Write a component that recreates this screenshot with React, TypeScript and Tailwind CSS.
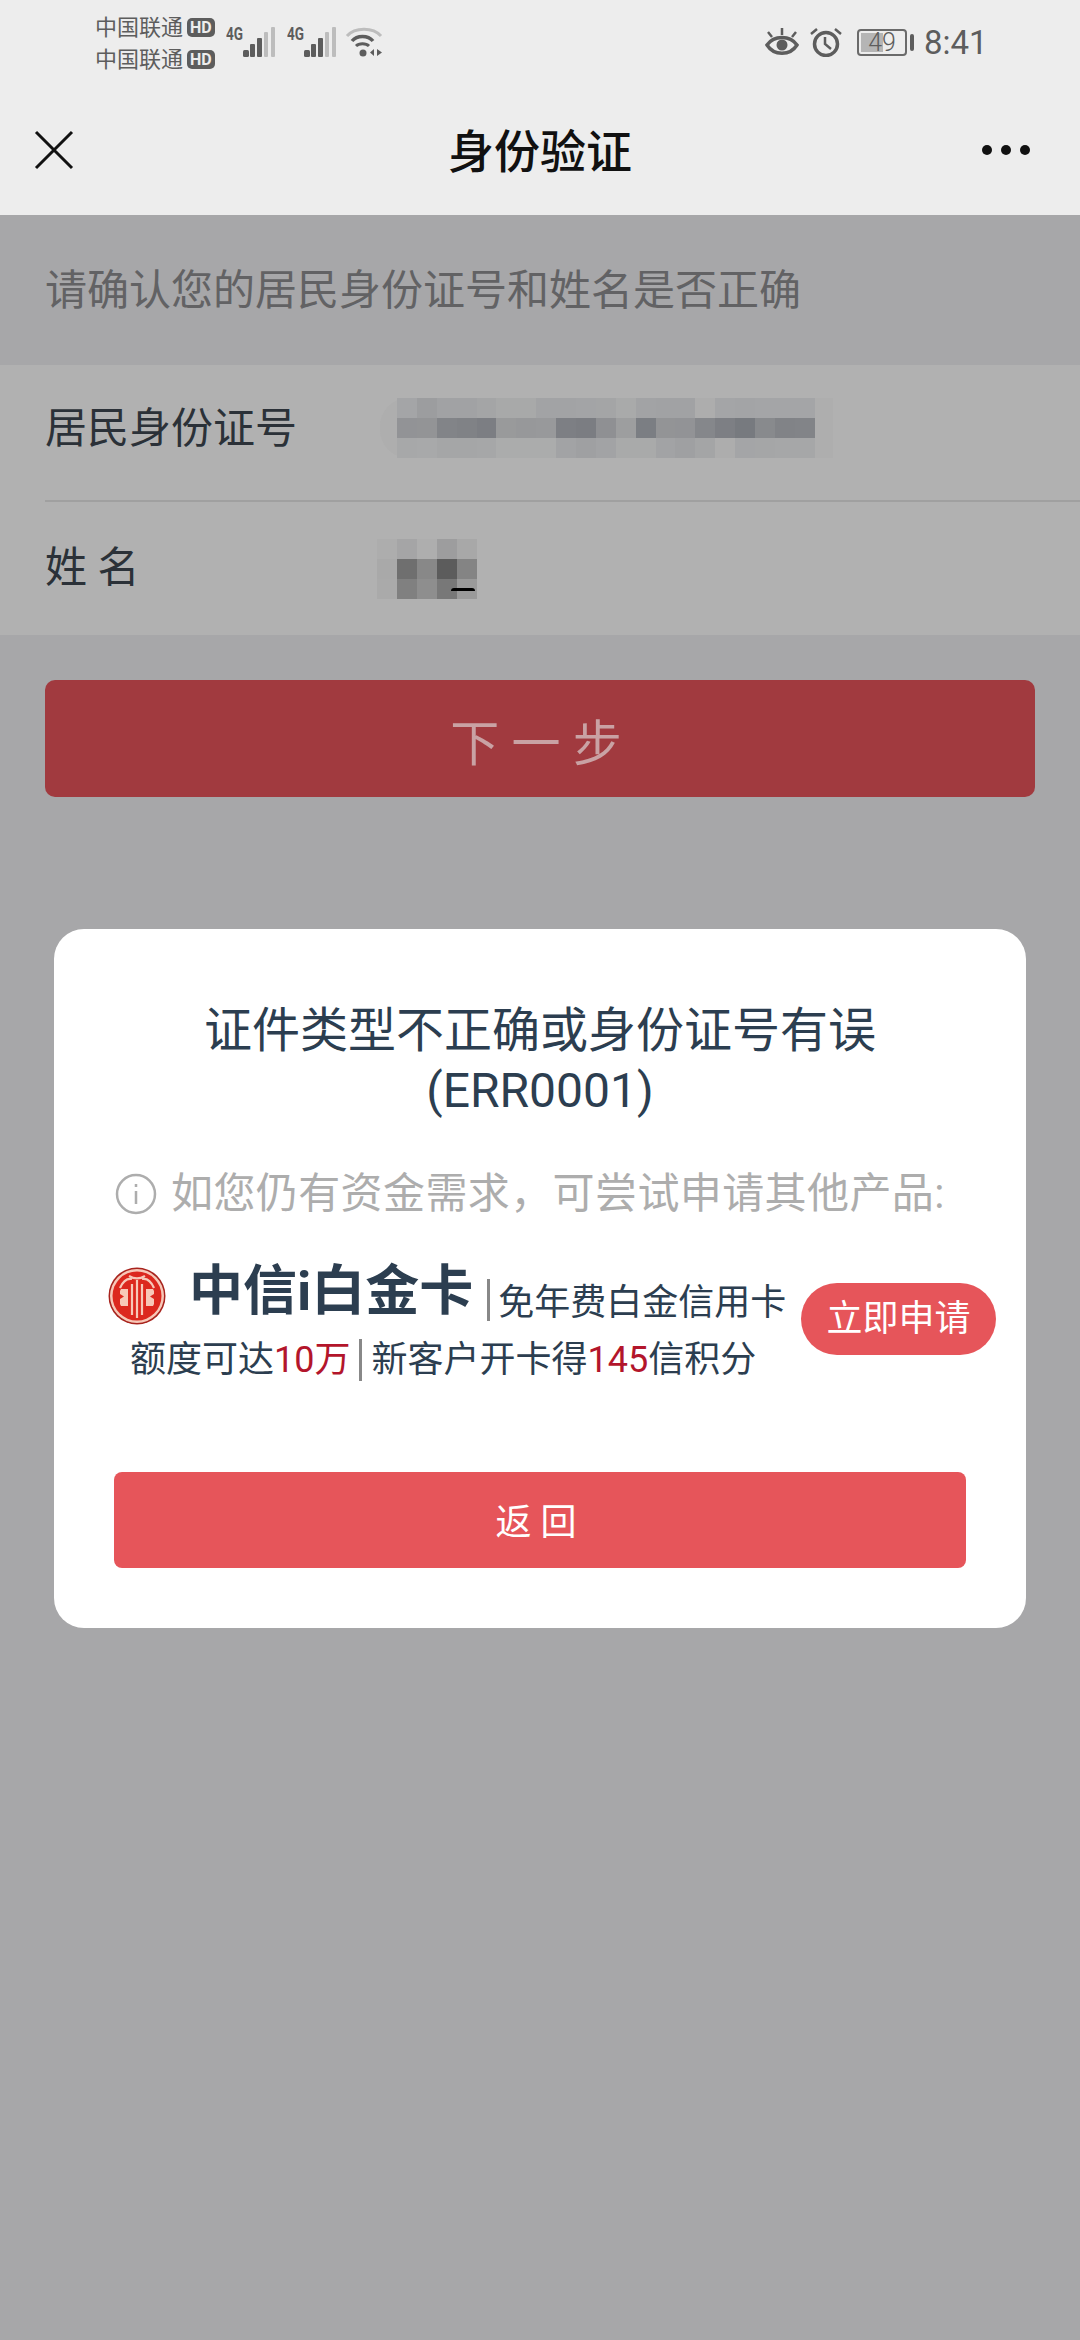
const cjk = "font-['Roboto','Noto_Sans_CJK_SC',sans-serif]";

const idRows = [
  ["#a4a5a7", "#9c9d9f", "#a1a2a4", "#a1a2a4", "#a4a5a6", "#a8a9a9", "#a8a9a9", "#a2a3a5", "#a2a3a5", "#a3a4a6", "#a4a5a6", "#a9aaaa", "#a2a3a5", "#a1a2a4", "#a1a2a4", "#adadad", "#a4a5a7", "#a3a4a6", "#a4a5a7", "#a4a5a7", "#a4a5a7"],
  ["#929396", "#939496", "#828488", "#808286", "#7c7e83", "#999a9b", "#97989a", "#98999b", "#7d7f84", "#7b7d82", "#8f9093", "#9d9e9f", "#7b7e83", "#939496", "#929396", "#85878b", "#7d7f84", "#777a7f", "#888a8d", "#818387", "#828488"],
  ["#a7a8a9", "#a8a9aa", "#a5a6a7", "#a5a6a7", "#a6a7a8", "#abacac", "#abacac", "#abacac", "#a2a3a5", "#9fa0a2", "#a2a3a5", "#a9aaaa", "#a9aaaa", "#a2a3a5", "#9fa0a2", "#a4a5a6", "#adadad", "#a4a5a7", "#a5a6a7", "#a6a7a8", "#a6a7a8"],
];

const nameRows = [
  ["#adadad", "#a5a5a6", "#aeaeae", "#9d9d9e", "#a8a8a8"],
  ["#a9a9a9", "#6f6f6f", "#888888", "#5c5c5c", "#848484"],
  ["#aaaaaa", "#808080", "#8e8e8e", "#787878", "#9a9a9a"],
];

function Signal() {
  return (
    <svg width="49" height="36" viewBox="0 0 49 36">
      <text x="0" y="16" fontSize="18" fontWeight="700" fill="#5d5d5d" fontFamily="Roboto" textLength="17" lengthAdjust="spacingAndGlyphs">4G</text>
      <rect x="17" y="26" width="6" height="7" fill="#5d5d5d" rx="1.5" />
      <rect x="24" y="20" width="5" height="13" fill="#5d5d5d" rx="1" />
      <rect x="31" y="14" width="5" height="19" fill="#5d5d5d" rx="1" />
      <rect x="38" y="8" width="4" height="25" fill="#bdbdbd" rx="1" />
      <rect x="45" y="3" width="4" height="30" fill="#bdbdbd" rx="1" />
    </svg>
  );
}

function StatusBar() {
  return (
    <div className="flex h-[80px] items-center pt-[4px] pr-[96px] pl-[95px] text-[#5d5d5d]">
      <div className="flex w-[120px] flex-col gap-[2px] pt-[3px]">
        {[0, 1].map((i) => (
          <div key={i} className="flex h-[30px] items-center gap-[4px] text-[22px] leading-none">
            <span>中国联通</span>
            <span className="rounded-[5px] bg-[#5d5d5d] px-[3px] text-[16px] leading-[19px] font-bold text-[#ededed]">HD</span>
          </div>
        ))}
      </div>
      <div className="ml-[11px] flex items-center gap-[12px]">
        <Signal />
        <Signal />
      </div>
      <svg className="ml-[9px]" width="38" height="32" viewBox="0 0 38 32" fill="none">
        <path d="M2 10C10 1 28 1 36 10" stroke="#bdbdbd" strokeWidth="3" />
        <path d="M7 15C12 9 23 9 28 15" stroke="#5d5d5d" strokeWidth="3.5" />
        <path d="M11 20C14 17 21 17 24 20" stroke="#5d5d5d" strokeWidth="3" />
        <circle cx="18" cy="27" r="3.5" fill="#5d5d5d" />
        <path d="M29 23v7l-4-3.500zM32 23v7l5-3.500z" fill="#5d5d5d" />
      </svg>
      <div className="ml-auto flex items-center">
        <svg width="34" height="30" viewBox="0 0 34 30" fill="none">
          <path d="M2 18C9 8 25 8 32 18C25 29 9 29 2 18Z" stroke="#5d5d5d" strokeWidth="3.500" />
          <circle cx="17" cy="18" r="5.500" fill="#5d5d5d" />
          <path d="M17 1v7M3 5l4 5M31 5l-4 5" stroke="#5d5d5d" strokeWidth="2.500" />
        </svg>
        <svg className="ml-[11px]" width="32" height="30" viewBox="0 0 32 30" fill="none">
          <circle cx="16" cy="17" r="11.500" stroke="#5d5d5d" strokeWidth="3.500" />
          <path d="M15 10v7l6 5M1 7l6-5M31 7l-6-5" stroke="#5d5d5d" strokeWidth="2.500" />
        </svg>
        <div className="ml-[15px] flex items-center gap-[3px]">
          <div className="relative h-[27px] w-[50px] rounded-[4px] border-2 border-[#6a6a6a] p-[2px]">
            <div className="h-full w-[22px] bg-[#b5b5b5]" />
            <span className="absolute inset-0 text-center text-[25px] leading-[23px] font-light">49</span>
          </div>
          <div className="h-[17px] w-[4px] rounded-[2px] bg-[#5d5d5d]" />
        </div>
        <span className="ml-[10px] w-[60px] text-[33px] leading-none whitespace-nowrap">8:41</span>
      </div>
    </div>
  );
}

function CiticLogo() {
  return (
    <svg width="58" height="58" viewBox="0 0 58 58" className="shrink-0">
      <circle cx="29" cy="29" r="28.500" fill="#a8231d" />
      <circle cx="29" cy="29" r="27" fill="#f7c8b8" />
      <circle cx="29" cy="29" r="24.500" fill="#dc281e" />
      <path d="M12 21C15 14 19 11 24 12M46 21C43 14 39 11 34 12" fill="none" stroke="#f7c8b8" strokeWidth="2.200" />
      <path d="M13 22h7v17h-7l-1-2v-5l4-2.500-4-2.500v-3z" fill="#f7c8b8" />
      <path d="M45 22h-7v17h7l1-2v-5l-4-2.500 4-2.500v-3z" fill="#f7c8b8" />
      <path d="M21 9c5 3 11 3 16 0M24 17v31M34 17v31M29 13v38" fill="none" stroke="#f7c8b8" strokeWidth="2.200" />
    </svg>
  );
}

function Mosaic({ rows, colWidth }: { rows: string[][]; colWidth: number }) {
  return (
    <div>
      {rows.map((row, r) => (
        <div key={r} className="flex h-[20px]">
          {row.map((c, i) => (
            <div key={i} className="h-full" style={{ background: c, width: colWidth }} />
          ))}
        </div>
      ))}
    </div>
  );
}

export default function App() {
  return (
    <div className={`${cjk} min-h-[2340px] w-[1080px] bg-[#a7a7a9]`}>
      <div className="h-[215px] bg-[#ededed]">
        <StatusBar />
        <div className="grid h-[135px] grid-cols-[1fr_auto_1fr] items-center pt-[5px] pr-[50px] pl-[32px]">
          <svg width="44" height="44" viewBox="0 0 44 44" stroke="#111" strokeWidth="3">
            <path d="M4 4l36 36M40 4L4 40" />
          </svg>
          <h1 className="ml-[18px] pt-[4px] text-[46px] leading-none font-medium text-[#111]">身份验证</h1>
          <div className="flex w-[48px] justify-between justify-self-end">
            {[0, 1, 2].map((i) => (
              <span key={i} className="size-[10px] rounded-full bg-[#111]" />
            ))}
          </div>
        </div>
      </div>
      <div className="flex h-[150px] items-center px-[45px] text-[42px] text-[#626264]">请确认您的居民身份证号和姓名是否正确</div>
      <div className="bg-[#b1b1b1] pl-[45px]">
        <div className="flex h-[137px] items-center border-b-2 border-[#a0a0a0] text-[42px] text-[#2b3138]">
          <span className="w-[335px] pb-[9px]">居民身份证号</span>
          <div className="mb-[10px] rounded-l-[28px] bg-[#aeaeae] pr-[18px] pl-[17px]">
            <Mosaic rows={idRows} colWidth={19.9} />
          </div>
        </div>
        <div className="flex h-[133px] items-center text-[42px] text-[#2b3138]">
          <span className="w-[332px] pb-[2px]">姓 名</span>
          <div className="relative">
            <Mosaic rows={nameRows} colWidth={20} />
            <span className="absolute right-[2px] bottom-[8px] h-[3px] w-[24px] rounded-t-full bg-black" />
          </div>
        </div>
      </div>
      <div className="mx-[45px] mt-[45px] flex h-[117px] items-center justify-center rounded-[10px] bg-[#a13a3f] pt-[13px] pr-[8px] text-[49px] text-[#c9a2a4]">下 一 步</div>

      <div className="mx-[54px] mt-[132px] h-[699px] rounded-[30px] bg-white pt-[72px]">
        <div className="text-center text-[48px] leading-[60px] text-[#2c3e50]">
          <p>证件类型不正确或身份证号有误</p>
          <p>(ERR0001)</p>
        </div>
        <div className="mt-[52px] flex items-center pl-[61px] text-[42px] leading-none tracking-[0.4px] text-[#adadad]">
          <svg width="42" height="42" viewBox="0 0 42 42" fill="none" stroke="#adadad" strokeWidth="2.500" className="mr-[14px] shrink-0">
            <circle cx="21" cy="21" r="19" />
            <path d="M21 18v13M21 11v3" />
          </svg>
          如您仍有资金需求，可尝试申请其他产品:
        </div>
        <div className="relative mt-[43px] h-[140px]">
          <div className="flex h-[76px] items-center pl-[54px]">
            <CiticLogo />
            <span className="mb-[8px] ml-[23px] text-[54px] leading-none font-bold text-[#2c3e50]">中信i白金卡</span>
            <span className="mt-[8px] ml-[14px] h-[42px] w-[3px] bg-[#888]" />
            <span className="mt-[14px] ml-[8px] text-[36px] text-[#2c3e50]">免年费白金信用卡</span>
          </div>
          <div className="flex h-[52px] items-center pl-[76px] text-[36px] text-[#2c3e50]">
            <span>额度可达</span>
            <span className="text-[#b3152b]">10万</span>
            <span className="mx-[9px] h-[42px] w-[3px] bg-[#888]" />
            <span>新客户开卡得</span>
            <span className="text-[#b3152b]">145</span>
            <span>信积分</span>
          </div>
          <div className="absolute top-[25px] right-[30px] flex h-[72px] w-[195px] items-center justify-center rounded-full bg-[#e6555a] text-[36px] text-white">立即申请</div>
        </div>
        <div className="mx-[60px] mt-[74px] flex h-[96px] items-center justify-center rounded-[8px] bg-[#e6555a] pt-[5px] pr-[8px] text-[36px] text-white">返 回</div>
      </div>
    </div>
  );
}
